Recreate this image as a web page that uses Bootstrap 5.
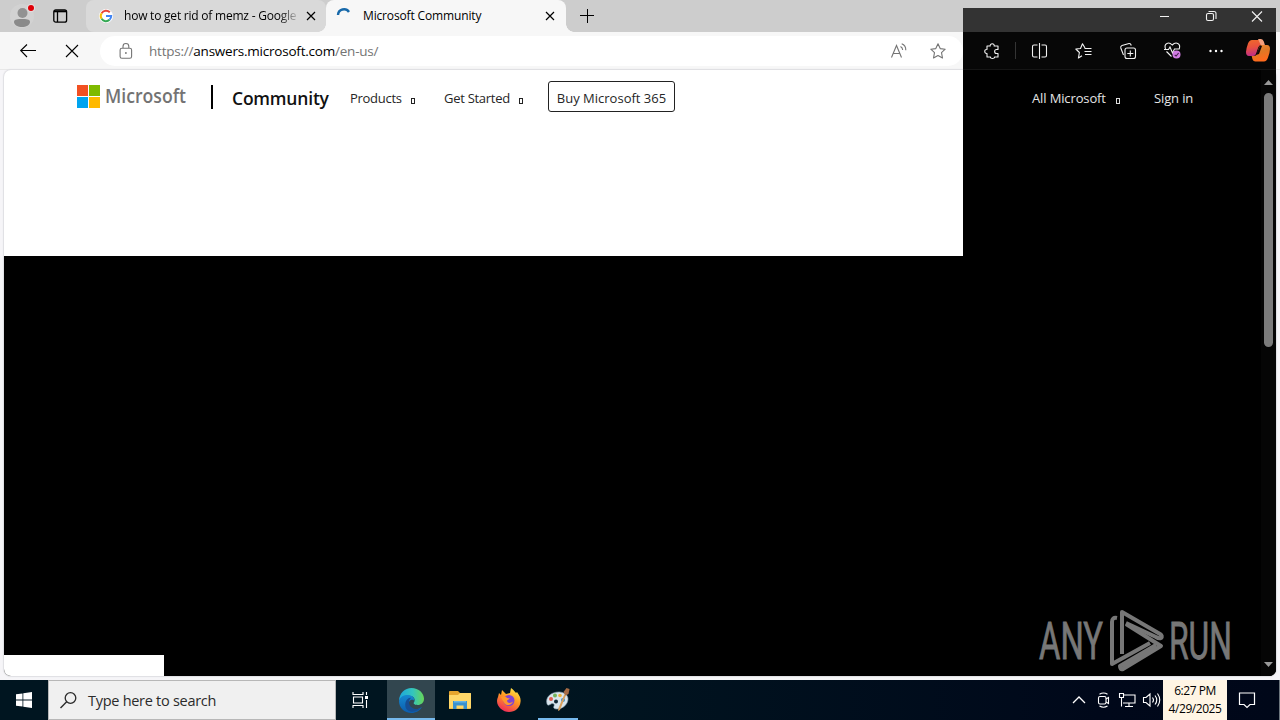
<!DOCTYPE html>
<html lang="en">
<head>
    <meta charset="UTF-8">
    <meta name="viewport" content="width=device-width, initial-scale=1.0">
    <title>Microsoft Community</title>
    <link href="https://cdn.jsdelivr.net/npm/bootstrap@5.3.0/dist/css/bootstrap.min.css" rel="stylesheet">
    <style>
        body {
            font-family: "Open Sans", "Noto Sans", sans-serif;
            font-size: 12px;
            line-height: 1;
            color: #000;
        }
        svg { display: block; flex: none; overflow: visible; }
        .line-icon { fill: none; stroke: currentColor; stroke-width: 1.1; }
        .desktop { width: 1280px; height: 720px; background: #f6f5f8; }
        .label { white-space: nowrap; flex: none; }

        /* tabs */
        .tab-strip { height: 32px; background: #cdcdcd; }
        .profile { width: 86px; padding-left: 10px; gap: 17px; }
        .browser-tab { height: 32px; width: 240px; padding: 0 10px 0 13px; }
        .browser-tab.idle { background: #d9d9d9; border-radius: 8px; }
        .browser-tab.current { background: #f7f7f7; border-radius: 8px 8px 0 0; }
        .browser-tab.current::before, .browser-tab.current::after {
            content: ""; position: absolute; bottom: 0; width: 8px; height: 8px;
        }
        .browser-tab.current::before { left: -8px; background: radial-gradient(circle at 0 0, transparent 7.5px, #f7f7f7 8px); }
        .browser-tab.current::after { right: -8px; background: radial-gradient(circle at 100% 0, transparent 7.5px, #f7f7f7 8px); }
        .tab-title { overflow: hidden; height: 18px; line-height: 18px; letter-spacing: -.15px; }
        .fade-end { width: 182px; margin-left: 11px; letter-spacing: -.22px; -webkit-mask-image: linear-gradient(90deg, #000 155px, transparent 176px); }

        /* address row */
        .tool-row { height: 38px; background: #f7f7f7; border-bottom: 1px solid #e8e8e8; padding-left: 20px; }
        .address { width: 863px; height: 30px; background: #fff; border-radius: 15px; margin-left: 22px; padding: 0 17px 0 19px; color: #747474; }
        .url { font-size: 13.5px; letter-spacing: -.22px; margin-left: 16px; padding-top: 2px; }

        /* page */
        .page-area { height: 606px; margin: 0 4px; border-radius: 7px; background: #fff; overflow: hidden; box-shadow: 0 0 1px 1px #dfdfe3; }
        .site-head { height: 186px; padding: 8px 0 0 73px; }
        .site-nav { height: 36px; }
        .divider { width: 2px; height: 24px; background: #000; margin: 2px 19px 0 26px; }
        .community { font-size: 17.5px; font-weight: 600; width: 98px; margin-right: 20px; padding-top: 5px; letter-spacing: -.2px; color: #111; }
        .nav-label { font-size: 13px; color: #262626; letter-spacing: -.28px; padding-top: 5px; }
        .tofu { width: 4px; height: 6px; border: 1px solid #222; margin-top: 10px; }
        .buy { width: 127px; height: 31px; border: 1px solid #222; border-radius: 3px; font-size: 13px; color: #262626; margin-left: 25px; padding-top: 5px; }
        .blank-black { background: #000; height: 399px; }
        .white-patch { width: 160px; height: 21px; }

        /* unpainted part of the window */
        .dark-pane { left: 963px; top: 8px; width: 313px; height: 668px; background: #000; color: #f2f2f2; border-radius: 0 0 7px 0; }
        .dark-title { height: 24px; background: #333; padding-right: 14px; }
        .dark-tools { height: 38px; background: #070707; border-bottom: 1px solid #151515; padding-left: 21px; }
        .tool-split { width: 1px; height: 17px; background: #343434; margin: 0 16px 0 15px; }
        .dark-page { height: 606px; }
        .dark-page .site-nav { margin-top: 8px; padding-left: 69px; }
        .dark-page .nav-label { color: #e4e4e4; letter-spacing: -.13px; }
        .dark-page .tofu { border-color: #ddd; }
        .scroller { width: 15px; background: #050505; padding: 10px 0 9px; }
        .thumb { width: 9px; height: 254px; border-radius: 5px; background: #7b7b7b; margin-top: 8px; }
        .watermark { left: 1036px; top: 608px; }

        /* taskbar */
        .task-bar { height: 40px; margin-top: 4px; background: linear-gradient(90deg, #001520 0, #001520 550px, #00081a 1100px, #000719 100%); color: #fff; }
        .start { width: 48px; }
        .search { width: 288px; height: 40px; background: #f0f0f0; border: 1px solid #b7b7b7; color: #2b2b2b; font-size: 14.5px; padding-left: 11px; }
        .search .label { margin-left: 11px; padding-top: 2px; letter-spacing: -.28px; }
        .task-item { width: 49px; height: 40px; }
        .task-item.opened { border-bottom: 2px solid #76b9ed; padding-top: 2px; }
        .task-item.focused { width: 48px; background: #32464f; }
        .clock { width: 64px; height: 40px; background: #fff5e4; color: #000; line-height: 18px; padding-top: 2px; }
        .clock .label { letter-spacing: -.45px; }
    </style>
</head>
<body>
    <div class="desktop position-relative overflow-hidden">
        <div class="tab-strip d-flex align-items-center">
            <div class="profile d-flex align-items-center">
                <svg width="26" height="26" viewBox="0 0 26 26">
                    <circle cx="12" cy="13" r="12" fill="#d2d2d2"/>
                    <circle cx="12.5" cy="10" r="5" fill="#929292"/>
                    <path d="M4 19c0-3 4-3 8-3s8 0 8 3c0 3-4 5-8 5s-8-2-8-5z" fill="#8a8a8a"/>
                    <circle cx="21" cy="5" r="4" fill="#e5dddd"/><circle cx="21" cy="5" r="3" fill="#df0008"/>
                </svg>
                <svg class="line-icon" width="15" height="14" viewBox="0 0 15 14"><rect x=".8" y=".8" width="12.8" height="12.4" rx="2" stroke-width="1.3"/><path d="M1 2.300h12.500" stroke-width="2"/><path d="M4.500 3v10" stroke-width="1.300"/></svg>
            </div>
            <div class="browser-tab idle d-flex align-items-center">
                <svg width="14" height="14" viewBox="0 0 14 14">
                    <circle cx="7" cy="7" r="7" fill="#fff"/>
                    <g fill="none" stroke-width="2"><path d="M2.6 4.2A5.2 5.2 0 0 1 10.8 3.3" stroke="#ea4335"/><path d="M2.6 9.8a5.2 5.2 0 0 1 0-5.6" stroke="#fbbc05"/><path d="M10.5 10.8a5.2 5.2 0 0 1-7.9-1" stroke="#34a853"/><path d="M7 7h5.2a5.2 5.2 0 0 1-1.7 3.8" stroke="#4285f4"/></g>
                </svg>
                <span class="tab-title fade-end label">how to get rid of memz - Google</span>
                <svg class="line-icon" width="10" height="10" viewBox="0 0 10 10"><path d="M1 1l8 8M9 1L1 9" stroke-width="1.2"/></svg>
            </div>
            <div class="browser-tab current position-relative d-flex align-items-center">
                <svg width="14" height="14" viewBox="0 0 14 14"><path d="M-1 6A6 6 0 0 1 10 3" fill="none" stroke="#1769aa" stroke-width="2.4"/></svg>
                <span class="tab-title label" style="width: 182px; margin-left: 10px">Microsoft Community</span>
                <svg class="line-icon" width="10" height="10" viewBox="0 0 10 10"><path d="M1 1l8 8M9 1L1 9" stroke-width="1.2"/></svg>
            </div>
            <svg class="line-icon" width="14" height="14" viewBox="0 0 14 14" style="margin-left: 14px"><path d="M0 6.500h14M7.500 0v14" stroke-width="1"/></svg>
        </div>

        <div class="tool-row d-flex align-items-center">
            <svg class="line-icon" width="16" height="14" viewBox="0 0 16 14"><path d="M7 .5L.7 6.500 7 13M.7 6.500H16"/></svg>
            <svg class="line-icon" width="12" height="12" viewBox="0 0 12 12" style="margin-left: 30px"><path d="M0 0l12 12M12 0L0 12"/></svg>
            <div class="address d-flex align-items-center">
                <svg class="line-icon" width="14" height="16" viewBox="0 0 14 16"><rect x="1.1" y="5.2" width="11.5" height="10" rx="1.8"/><path d="M4 5V3.4a2.9 2.9 0 0 1 5.8 0V5"/><circle cx="6.9" cy="10" r=".9" fill="currentColor" stroke="none"/></svg>
                <span class="url label flex-grow-1">https://<span class="text-black">answers.microsoft.com</span>/en-us/</span>
                <svg class="line-icon" width="16" height="16" viewBox="0 0 16 16"><path d="M.5 14.500L5.500 2.500l5 12M2.300 10.500h6.500M9.500 3.500q2 1 2.200 3.500M10.700.800q4.200 1.500 4.100 6.400"/></svg>
                <svg class="line-icon" width="16" height="16" viewBox="0 0 16 16" style="margin-left: 23px"><path d="M8 .8l2.200 4.800 5 .6-3.700 3.500 1 5.300L8 12.500 3.500 15l1-5.300L.8 6.200l5-.6z" stroke-linejoin="round"/></svg>
            </div>
        </div>

        <div class="page-area">
            <div class="site-head">
                <div class="site-nav d-flex align-items-center">
                    <svg width="23" height="23" viewBox="0 0 23 23"><path fill="#f25022" d="M0 0h11v11H0z"/><path fill="#7fba00" d="M12 0h11v11H12z"/><path fill="#00a4ef" d="M0 12h11v11H0z"/><path fill="#ffb900" d="M12 12h11v11H12z"/></svg>
                    <svg width="85" height="26" viewBox="0 0 85 26"><text x="5" y="20" font-size="19.5" font-weight="600" fill="#737373" textLength="81" lengthAdjust="spacingAndGlyphs">Microsoft</text></svg>
                    <span class="divider"></span>
                    <span class="community label">Community</span>
                    <span class="nav-label label" style="width: 61px">Products</span><i class="tofu"></i>
                    <span class="nav-label label" style="width: 75px; margin-left: 29px">Get Started</span><i class="tofu"></i>
                    <span class="buy label d-flex align-items-center justify-content-center">Buy Microsoft 365</span>
                </div>
            </div>
            <div class="blank-black"></div>
            <div class="d-flex bg-black"><div class="white-patch bg-white"></div></div>
        </div>

        <div class="task-bar d-flex align-items-center">
            <div class="start d-flex justify-content-center">
                <svg width="16" height="16" viewBox="0 0 16 16" fill="#fff"><path d="M0 2.300L6.500 1.400v6.200H0zM7.300 1.200L16 0v7.600H7.300zM0 8.400h6.500v6.200L0 13.700zM7.300 8.400H16V16l-8.700-1.200z"/></svg>
            </div>
            <div class="search d-flex align-items-center">
                <svg class="line-icon" width="17" height="17" viewBox="0 0 17 17"><circle cx="10.500" cy="6" r="5.300" stroke-width="1.300"/><path d="M6.700 9.800L.5 16" stroke-width="1.400"/></svg>
                <span class="label">Type here to search</span>
            </div>
            <div class="task-item d-flex align-items-center justify-content-center" style="width: 51px">
                <svg class="line-icon" width="19" height="16" viewBox="0 0 19 16"><path d="M1 0v2.500h10V0M1 16v-2.500h10V16M1.500 5h9v6h-9zM14.500 0v3M14.500 8v8"/><path d="M13 4h3v3h-3z" fill="#fff" stroke="none"/></svg>
            </div>
            <div class="task-item focused opened d-flex align-items-center justify-content-center">
                <svg width="25" height="25" viewBox="0 0 24 24">
                    <defs>
                        <linearGradient id="edgeTop" x1="0" x2="1"><stop offset="0" stop-color="#1ca7dc"/><stop offset=".55" stop-color="#34c5bd"/><stop offset="1" stop-color="#68d557"/></linearGradient>
                        <linearGradient id="edgeLow" x1="0" y1="0" x2="0" y2="1"><stop offset="0" stop-color="#1689d0"/><stop offset="1" stop-color="#0b5cad"/></linearGradient>
                    </defs>
                    <path d="M0 12C.5 5 5.500 0 12 0c7 0 12 5 12 10.300 0 4-3 6-6 6-3.500 0-4.800-1.300-3.300-3C16 11 14 7.500 10 7.500 6 7.500 2 9 0 12z" fill="url(#edgeTop)"/>
                    <path d="M0 12.500C1 8 5.500 6.500 9 6.800c4 .4 6.200 3.200 5.700 5.500-.5-1-3-2-4.700.5-2.500 4 1.500 8 6 7.500 2.500 0 4.500-1 6-2.300C20 22 16 24 12 24 5 24 0 19 0 12.500z" fill="url(#edgeLow)"/>
                    <path d="M6 16c0-4 3-7 5.500-6.500-3 2.500-2 7 .5 9 3 2.400 6.700 2.300 9.500 0C18 24 6 25 6 16z" fill="#164e94"/>
                </svg>
            </div>
            <div class="task-item d-flex align-items-center justify-content-center">
                <svg width="22" height="20" viewBox="0 0 22 20"><path d="M0 1.500Q0 1 1 1h8l2 2h10.500v16H0z" fill="#e6a52d"/><path d="M0 5h9l2-2h10.500q.5 0 .5.500V18.500H0z" fill="#ffd768"/><path d="M4 11h14v8h-3.500v-3.500h-7V19H4z" fill="#3991d0"/><path d="M5 11h12v1.500H5z" fill="#67b4e5"/></svg>
            </div>
            <div class="task-item d-flex align-items-center justify-content-center">
                <svg width="24" height="24" viewBox="0 0 24 24">
                    <defs><linearGradient id="fox" x1=".8" y1="0" x2=".3" y2="1"><stop offset="0" stop-color="#ffe94a"/><stop offset=".45" stop-color="#ff9a22"/><stop offset="1" stop-color="#ef285b"/></linearGradient></defs>
                    <path d="M1 9l1-4 2 2 1-5 4 4 4-1 1-5c3 2 4 4 5 5l1-1c3 4 4 7 3.500 10C23 20 18 24 12 24S0 19 0 13q0-2 1-4z" fill="url(#fox)"/>
                    <circle cx="12" cy="12.500" r="5.500" fill="#8143d2"/>
                    <path d="M4 9c3-1.500 5-.5 6 1l3 .5-3 2c0 3 4 3 6 1-1 4-7 5-9 1-1-2-2-3-3-5.500z" fill="#ff982b"/>
                </svg>
            </div>
            <div class="task-item opened d-flex align-items-center justify-content-center" style="width: 40px; margin-left: 5px">
                <svg width="24" height="24" viewBox="0 0 24 24">
                    <path d="M1 16C-1 9 5 4 13 4c5 0 9 3 9 7 0 5-5 10-11 10-3 0-4-1-3-3s-1-3-3-2-3 2-4 0z" fill="#d9e5ed" stroke="#8ba5b4" stroke-width=".6"/>
                    <circle cx="5" cy="11" r="2" fill="#df5d4e"/><circle cx="9" cy="7.500" r="2" fill="#72b45b"/><circle cx="14" cy="7.500" r="1.800" fill="#edb33d"/><circle cx="17" cy="12" r="2" fill="#3e91cb"/><circle cx="10" cy="13.500" r="2" fill="#122835"/>
                    <path d="M20 7l-6 15-2 1 .5-3L18.500 6z" fill="#daa15e"/><path d="M17.500 4l3-4 3 1-1 5-3 1.500z" fill="#a66b45"/>
                </svg>
            </div>
            <div class="d-flex align-items-center ms-auto">
                <svg class="line-icon" width="12" height="8" viewBox="0 0 12 8" style="margin-right: 13px"><path d="M0 7l6-6 6 6" stroke-width="1.3"/></svg>
                <svg class="line-icon" width="12" height="16" viewBox="0 0 12 16" style="margin-right: 9px"><rect x=".5" y="4.500" width="7.500" height="7.500" rx="1.500"/><path d="M8 7l2.500-1.500v6L8 10M1.500 2.200q4-2.500 8 0M1.500 14q4 2.500 8 0"/></svg>
                <svg class="line-icon" width="17" height="16" viewBox="0 0 17 16" style="margin-right: 7px"><path d="M5 3h11v8H4M10 11v3.500M6 14.500h8M.5 1.500h4v4h-4zM2.500 5.500V14.500"/></svg>
                <svg class="line-icon" width="17" height="16" viewBox="0 0 17 16" style="margin-right: 3px"><path d="M.5 5.500h2.500L7 2v12l-4-3.500H.5zM9.500 5.500q2 2.500 0 5M12 3.500q3.500 4.500 0 9M14.500 1.500q4.500 6.500 0 13"/></svg>
                <div class="clock text-center"><div class="label">6:27 PM</div><div class="label">4/29/2025</div></div>
                <svg class="line-icon" width="16" height="16" viewBox="0 0 16 16" style="margin: 0 24px 0 12px"><path d="M.5 1h15v11.500H11l-3 3-3-3H.5z" stroke-width="1.200"/></svg>
                <span class="border-start border-secondary" style="height: 40px; width: 1px"></span>
            </div>
        </div>

        <div class="dark-pane position-absolute overflow-hidden">
            <div class="dark-title d-flex justify-content-end">
                <svg class="line-icon" width="103" height="20" viewBox="0 0 103 20"><path d="M1 8.500h9M93 3.500l10 10M103 3.500l-10 10"/><rect x="47.500" y="5.500" width="7" height="7" rx="1.500"/><path d="M49.500 3.500h5.500q2 0 2 2V11"/></svg>
            </div>
            <div class="dark-tools d-flex align-items-center">
                <svg class="line-icon" width="16" height="16" viewBox="0 0 16 16"><path d="M3 3h3.200c-.5-3 4.600-3 4 0H14v3.500h-1.500c-2.500 0-2.500 4 0 4H14V14h-3.500c.3 2-4.400 2-4 0H3v-3.500c-3 .4-3-4.500 0-4z" stroke-linejoin="round"/></svg>
                <span class="tool-split"></span>
                <svg class="line-icon" width="15" height="16" viewBox="0 0 15 16"><path d="M5.500 2H2q-1.500 0-1.500 1.500v9Q.5 14 2 14h3.500M9.500 2H13q1.500 0 1.500 1.500v9q0 1.500-1.500 1.500H9.500M7.500 0v16"/></svg>
                <svg class="line-icon" width="17" height="16" viewBox="0 0 17 16" style="margin-left: 28px"><path d="M10 5L7.500.8 5.500 5.500.8 6l3.600 3.500-1 5.500L7 12.800M9.500 5.500h7M9.500 8.500h7M10 11.500h6.500" stroke-linejoin="round"/></svg>
                <svg class="line-icon" width="16" height="16" viewBox="0 0 16 16" style="margin-left: 28px"><rect x="5" y="5" width="10.500" height="10.500" rx="2"/><path d="M3.500 12L.8 5Q.3 3.200 2 2.500l7-2q1.700-.3 2.300 2M10.300 7.500v6M7.300 10.500h6"/></svg>
                <svg class="line-icon" width="17" height="17" viewBox="0 0 17 17" style="margin-left: 28px"><path d="M1.500 7C-.5 1 5-.5 8.200 3c3.500-3.500 9-2 7 4M0 7.500h4.500L6 5l2.500 6 2-4h5M2.500 9.500l5 5"/><circle cx="12.500" cy="12.500" r="4" fill="#cf7be2" stroke="none"/><path d="M10.700 13l1.400 1 2.500-3" stroke="#47204f"/></svg>
                <svg width="14" height="4" viewBox="0 0 14 4" fill="#fff" style="margin-left: 28px"><circle cx="1.500" cy="2" r="1.200"/><circle cx="7" cy="2" r="1.200"/><circle cx="12.500" cy="2" r="1.200"/></svg>
                <svg width="24" height="23" viewBox="0 0 24 23" style="margin-left: 23px">
                    <defs><linearGradient id="pilotA" x2=".2" y2="1"><stop stop-color="#f06a2a"/><stop offset=".5" stop-color="#e9513f"/><stop offset="1" stop-color="#c22e86"/></linearGradient><linearGradient id="pilotB" x2=".3" y2="1"><stop stop-color="#ef8b38"/><stop offset=".5" stop-color="#df7825"/><stop offset="1" stop-color="#ff6a1d"/></linearGradient></defs>
                    <path d="M6 1h9q2 0 3 3l.5 2H15q-2 0-2.800 2.500L10.300 14Q9.500 17 7 17H3q-3 0-3-4 0-3 2-8.500Q3.300 1 6 1z" fill="url(#pilotA)"/>
                    <path d="M12 0h3q2 0 3 3l.8 3h-4z" fill="#f6a07d"/>
                    <path d="M18 6h3q3 0 3 4 0 3-2 8.500-1.300 4-4 4H9.500q-2.500 0-3.200-3L5.700 17H8q2.500 0 3.300-3l1.800-5.500Q14 6 16 6z" fill="url(#pilotB)"/>
                    <path d="M14 7h2l-3 8-3 1z" fill="#150909"/>
                </svg>
            </div>
            <div class="dark-page d-flex">
                <div class="site-nav d-flex align-items-center flex-grow-1">
                    <span class="nav-label label" style="width: 84px">All Microsoft</span><i class="tofu"></i>
                    <span class="nav-label label" style="margin-left: 34px">Sign in</span>
                </div>
                <div class="scroller d-flex flex-column align-items-center">
                    <svg width="9" height="5" viewBox="0 0 9 5"><path d="M0 5l4.500-5L9 5z" fill="#999"/></svg>
                    <span class="thumb"></span>
                    <svg class="mt-auto" width="9" height="5" viewBox="0 0 9 5"><path d="M0 0h9L4.500 5z" fill="#999"/></svg>
                </div>
            </div>
        </div>

        <svg class="watermark position-absolute" width="198" height="66" viewBox="1036 608 198 66">
            <g fill="#777" stroke="#777" stroke-width=".8" font-family="Roboto, sans-serif" font-size="51">
                <text x="1039" y="659" textLength="64" lengthAdjust="spacingAndGlyphs">ANY</text>
                <text x="1169" y="659" textLength="63" lengthAdjust="spacingAndGlyphs">RUN</text>
            </g>
            <g fill="none" stroke="#777" stroke-width="4" stroke-linejoin="round">
                <path d="M1117 618q-5-1-5 4v42l38-21"/>
                <path d="M1122 654v-42l38 22q3 2 1 4-2 1-5-1l-30-14"/>
                <path d="M1126 624l35 22-38 23q-3 1-3-3l36-21"/>
            </g>
        </svg>
    </div>

    <script src="https://cdn.jsdelivr.net/npm/bootstrap@5.3.0/dist/js/bootstrap.bundle.min.js"></script>
</body>
</html>
